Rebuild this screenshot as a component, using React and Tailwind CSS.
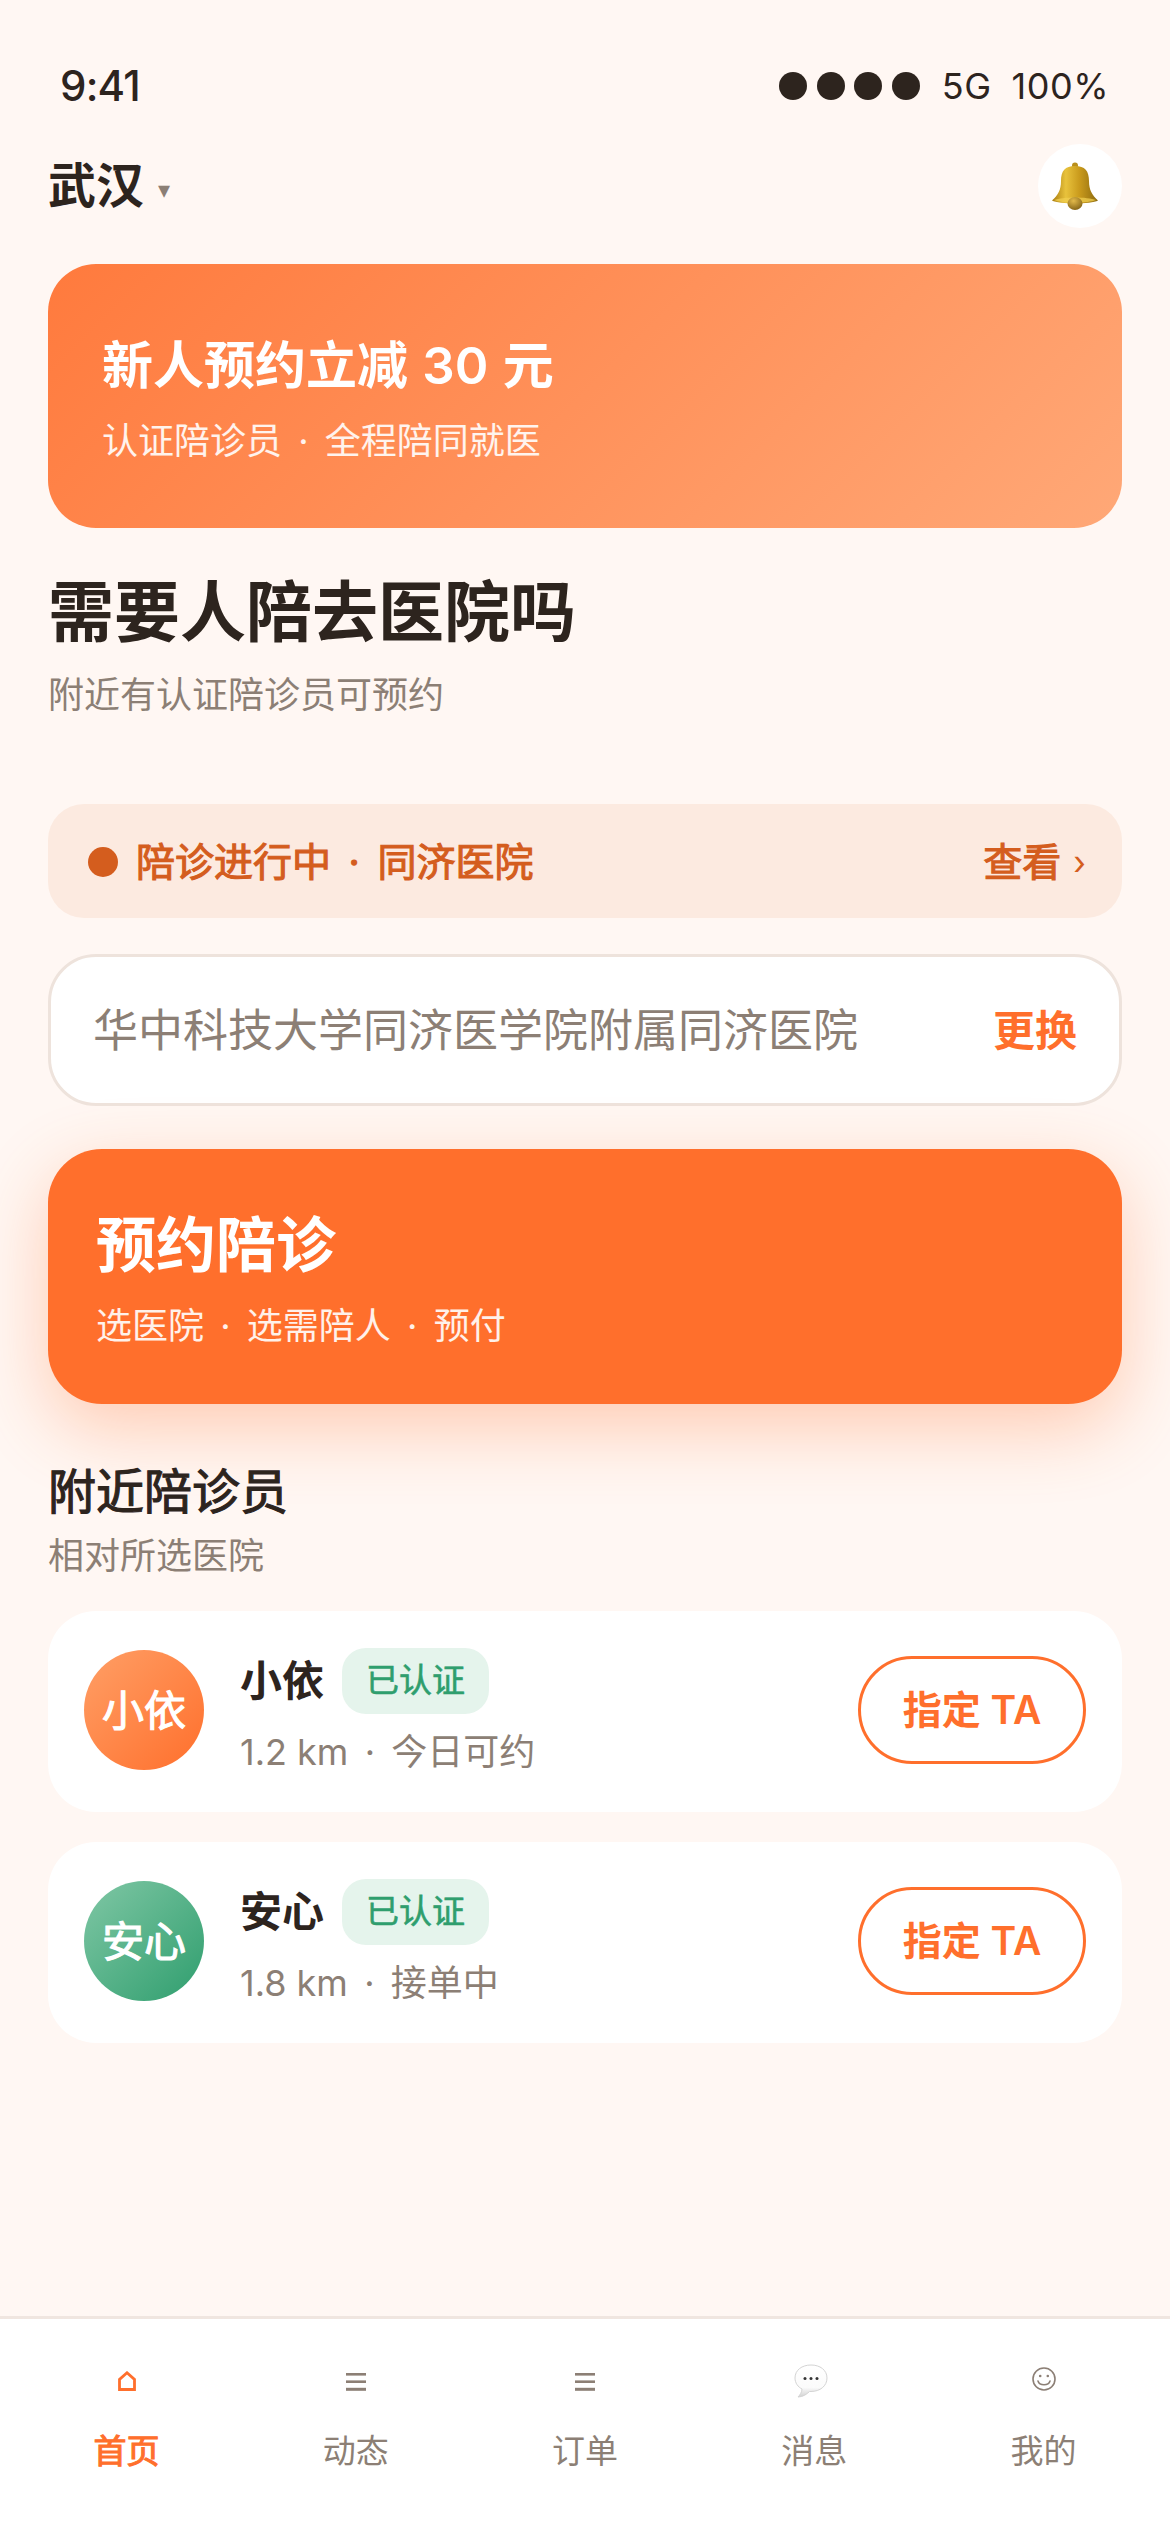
import React from "react";

const fontStack = "font-['Inter','Noto_Sans_CJK_SC',sans-serif]";

// the CJK font has no medium cut, so medium text gets a thin stroke
const medium = "font-normal [-webkit-text-stroke:1.1px_currentColor]";

// the separator dot sits wider than Inter's own spacing
const Dotted = ({ text }) =>
  text.split(" · ").map((part, i) => (
    <React.Fragment key={part}>
      {i > 0 && <span className="mx-[0.17em]"> · </span>}
      {part}
    </React.Fragment>
  ));

// gold bell in the header button
const BellIcon = () => (
  <svg width="48" height="48" viewBox="0 0 48 48" className="mr-[11px]">
    <defs>
      <linearGradient id="bellBody" x1="0" y1="0" x2="1" y2="0">
        <stop offset="0" stopColor="#a97c10" />
        <stop offset="0.3" stopColor="#e8c23c" />
        <stop offset="0.6" stopColor="#c99a1c" />
        <stop offset="1" stopColor="#8d6a0e" />
      </linearGradient>
      <radialGradient id="bellClapper" cx="0.4" cy="0.3" r="0.8">
        <stop offset="0" stopColor="#e2b94a" />
        <stop offset="1" stopColor="#7c5c12" />
      </radialGradient>
    </defs>
    <circle cx="24" cy="3.500" r="3" fill="#b98f1c" />
    <path
      d="M24 4C14 4 10 9 10 19C10 28 7 33 1 38.500C8 42.500 40 42.500 47 38.500C41 33 38 28 38 19C38 9 34 4 24 4Z"
      fill="url(#bellBody)"
    />
    <path d="M3 38C12 34.500 36 34.500 45 38C38 41.500 10 41.500 3 38Z" fill="#f0cf52" opacity="0.75" />
    <ellipse cx="24" cy="41.500" rx="7.500" ry="6.500" fill="url(#bellClapper)" />
  </svg>
);

const HomeIcon = () => (
  <svg width="18" height="20" viewBox="0 0 18 20" fill="none" stroke="#ff6f2c" strokeWidth="2.8" className="mb-[2px]">
    <path d="M1.500 18.500V8.500L9 1.800L16.500 8.500V18.500Z" strokeLinejoin="miter" />
  </svg>
);

const ListIcon = () => (
  <svg width="20" height="18" viewBox="0 0 20 18" fill="#8c7f75">
    <rect x="0" y="0" width="20" height="2.6" />
    <rect x="0" y="7.400" width="20" height="2.6" />
    <rect x="0" y="14.800" width="20" height="3" />
  </svg>
);

const BubbleIcon = () => (
  <svg width="34" height="34" viewBox="0 0 34 34" className="mb-[2px] mr-[6px]">
    <defs>
      <linearGradient id="bubbleFill" x1="0" y1="0" x2="0" y2="1">
        <stop offset="0" stopColor="#ffffff" />
        <stop offset="0.7" stopColor="#fbfbfb" />
        <stop offset="1" stopColor="#d2d2d2" />
      </linearGradient>
    </defs>
    <path
      d="M17 1C8 1 1 6 1 14C1 19 4 23 8 25C8 28 6 31 4 33C9 33 13 30 15.500 27.500C16 27.500 16.500 27.500 17 27.500C26 27.500 33 22 33 14C33 6 26 1 17 1Z"
      fill="url(#bubbleFill)"
      stroke="#d4d4d4"
      strokeWidth="1"
    />
    <circle cx="11" cy="14.500" r="1.500" fill="#333" />
    <circle cx="17" cy="14.500" r="1.500" fill="#333" />
    <circle cx="23" cy="14.500" r="1.500" fill="#333" />
  </svg>
);

const SmileIcon = () => (
  <svg width="24" height="24" viewBox="0 0 24 24" fill="none" stroke="#8c7f75" strokeWidth="1.600" className="mb-[6px] ml-[2px]">
    <circle cx="12" cy="12" r="11" />
    <circle cx="8.200" cy="9" r="1.300" fill="#8c7f75" stroke="none" />
    <circle cx="15.800" cy="9" r="1.300" fill="#8c7f75" stroke="none" />
    <path d="M6 14C7.500 19 16.500 19 18 14" strokeLinecap="round" />
  </svg>
);

const companions = [
  {
    name: "小依",
    meta: "1.2 km · 今日可约",
    avatar: "bg-[linear-gradient(135deg,#ff9f66,#ff6f2c)]",
  },
  {
    name: "安心",
    meta: "1.8 km · 接单中",
    avatar: "bg-[linear-gradient(135deg,#80c7a5,#2f9e6e)]",
  },
];

const tabs = [
  { label: "首页", icon: <HomeIcon />, active: true },
  { label: "动态", icon: <ListIcon /> },
  { label: "订单", icon: <ListIcon /> },
  { label: "消息", icon: <BubbleIcon /> },
  { label: "我的", icon: <SmileIcon /> },
];

export default function App() {
  return (
    <div className={`flex min-h-[2532px] flex-col bg-[#fff7f3] text-[#2d241e] ${fontStack}`}>
      {/* status bar */}
      <div className="mt-[59px] flex h-[54px] items-center justify-between pl-[60px] pr-[61px]">
        <span className="text-[42px] font-medium leading-[54px] tracking-[-0.8px]">9:41</span>
        <div className="flex items-center">
          <div className="flex gap-[9.6px]">
            {[0, 1, 2, 3].map((i) => (
              <span key={i} className="h-[28px] w-[28px] rounded-full bg-[#2d241e]" />
            ))}
          </div>
          <span className="ml-[22px] text-[36px] leading-[54px] tracking-[0.5px]">5G</span>
          <span className="ml-[20px] text-[36px] leading-[54px] tracking-[0.5px]">100%</span>
        </div>
      </div>

      <div className="flex flex-1 flex-col px-[48px]">
        {/* city + bell */}
        <div className="mt-[31px] flex h-[84px] items-center justify-between">
          <div className="flex items-center">
            <span className="text-[48px] font-semibold leading-[60px]">武汉</span>
            <span className="ml-[14px] mt-[8px] text-[24px] leading-[30px] text-[#8c7f75]">▾</span>
          </div>
          <div className="flex h-[84px] w-[84px] items-center justify-center rounded-full bg-white">
            <BellIcon />
          </div>
        </div>

        {/* promo banner */}
        <div className="mt-[36px] h-[264px] rounded-[48px] bg-[linear-gradient(135deg,#ff7a3d,#ffa877)] pl-[54px] pt-[66px] text-white">
          <div className="text-[51px] font-semibold leading-[72px] [word-spacing:1.5px]">新人预约立减 30 元</div>
          <div className="mt-[15px] text-[36px] leading-[48px] text-white/90">
            <Dotted text="认证陪诊员 · 全程陪同就医" />
          </div>
        </div>

        <h1 className="mt-[39px] text-[66px] font-bold leading-[90px]">需要人陪去医院吗</h1>
        <p className="mt-[11px] text-[36px] leading-[54px] text-[#8c7f75]">附近有认证陪诊员可预约</p>

        {/* ongoing order */}
        <div className="mt-[82px] flex h-[114px] items-center justify-between rounded-[36px] bg-[#fceae0] pl-[40px] pr-[36px] pt-[2px] text-[#d45d1e]">
          <div className="flex items-center">
            <span className="h-[30px] w-[30px] rounded-full bg-[#d45d1e]" />
            <span className={`ml-[18px] text-[39px] leading-[54px] ${medium}`}>
              <Dotted text="陪诊进行中 · 同济医院" />
            </span>
          </div>
          <div className="flex items-center">
            <span className={`text-[39px] leading-[54px] ${medium}`}>查看</span>
            <span className="ml-[12px] text-[33px] leading-[54px]">›</span>
          </div>
        </div>

        {/* hospital picker */}
        <div className="mt-[36px] flex h-[152px] items-center justify-between rounded-[48px] border-[3px] border-[#eee3dc] bg-white pl-[42px] pr-[42px] pt-[2px]">
          <span className="text-[45px] leading-[60px] text-[#8c7f75]">华中科技大学同济医学院附属同济医院</span>
          <span className="text-[42px] font-semibold leading-[60px] text-[#ff6f2c]">更换</span>
        </div>

        {/* main action */}
        <div className="mt-[43px] h-[255px] rounded-[54px] bg-[#ff6f2c] pl-[48px] pt-[54px] text-white shadow-[0_24px_72px_rgba(255,111,44,0.32)]">
          <div className="text-[60px] font-semibold leading-[84px]">预约陪诊</div>
          <div className="mt-[12px] text-[36px] leading-[54px] text-white/90">
            <Dotted text="选医院 · 选需陪人 · 预付" />
          </div>
        </div>

        <h2 className={`mt-[55px] text-[48px] leading-[66px] ${medium}`}>附近陪诊员</h2>
        <p className="mt-[4px] text-[36px] leading-[54px] text-[#8c7f75]">相对所选医院</p>

        {/* companion list */}
        <div className="mt-[28px] flex flex-col gap-[30px]">
          {companions.map((c) => (
            <div key={c.name} className="flex h-[201px] items-center rounded-[48px] bg-white px-[36px] pb-[3px]">
              <div className={`flex h-[120px] w-[120px] shrink-0 items-center justify-center rounded-full text-[42px] text-white ${medium} ${c.avatar}`}>
                {c.name}
              </div>
              <div className="ml-[36px] mt-[6px] flex-1">
                <div className="flex items-center">
                  <span className="text-[42px] font-semibold leading-[54px]">{c.name}</span>
                  <span className={`ml-[18px] flex h-[66px] items-center rounded-[24px] bg-[#e5f4ec] px-[24px] text-[33px] text-[#2f9e6e] [-webkit-text-stroke:0.6px_currentColor]`}>已认证</span>
                </div>
                <div className="mt-[11px] text-[36px] leading-[54px] text-[#8c7f75]">
                  <Dotted text={c.meta} />
                </div>
              </div>
              <div className="flex h-[108px] w-[228px] shrink-0 items-center justify-center rounded-full border-[3px] border-[#ff6f2c] text-[39px] font-semibold text-[#ff6f2c]">
                指定 TA
              </div>
            </div>
          ))}
        </div>
      </div>

      {/* tab bar */}
      <div className="grid h-[216px] grid-cols-5 border-t-[3px] border-[#f0e6e0] bg-white px-[12px] pt-[39px]">
        {tabs.map((t) => (
          <div key={t.label} className="flex flex-col items-center">
            <div className="flex h-[48px] items-center justify-center">{t.icon}</div>
            <span className={`mt-[21px] text-[33px] leading-[48px] ${t.active ? `text-[#ff6f2c] ${medium}` : "text-[#8c7f75]"}`}>
              {t.label}
            </span>
          </div>
        ))}
      </div>
    </div>
  );
}
